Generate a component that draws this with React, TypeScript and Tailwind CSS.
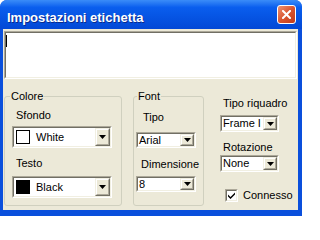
import React from "react";

// drop-down arrow button of a classic combo box
function DropButton({ wide }: { wide?: boolean }) {
  return (
    <div
      className={`flex shrink-0 border border-t-[#f1efe2] border-l-[#f1efe2] border-b-[#716f64] border-r-[#716f64] ${
        wide ? "w-[15px]" : "w-[14px]"
      }`}
    >
      <div className="flex flex-1 items-center justify-center border border-t-white border-l-white border-b-[#aca899] border-r-[#aca899] bg-[#ece9d8]">
        <svg width="7" height="4" viewBox="0 0 7 4">
          <polygon points="0,0 7,0 3.5,4" fill="black" />
        </svg>
      </div>
    </div>
  );
}

function Combo({
  className,
  wide,
  children,
}: {
  className: string;
  wide?: boolean;
  children: React.ReactNode;
}) {
  return (
    <div
      className={`flex border border-t-[#aca899] border-l-[#aca899] border-b-white border-r-white ${className}`}
    >
      <div className="flex min-w-0 flex-1 border border-t-[#716f64] border-l-[#716f64] border-b-[#f1efe2] border-r-[#f1efe2] bg-white">
        <div className="flex min-w-0 flex-1 items-center overflow-hidden whitespace-nowrap">
          {children}
        </div>
        <DropButton wide={wide} />
      </div>
    </div>
  );
}

export default function App() {
  return (
    <div className="h-[216px] w-[302px] bg-white font-['Liberation_Sans',Arial,sans-serif] text-[11px] leading-[13px] text-black">
      <div className="flex h-full flex-col rounded-t-[7px] bg-[#0a4fdc]">
        {/* Title bar */}
        <div className="flex h-[29px] shrink-0 items-start justify-between rounded-t-[7px] bg-linear-to-b from-[#3a8cf8] from-0% via-[#0a5eee] via-25% to-[#0348d6]">
          <span className="pl-[7px] pt-[10px] text-[13px] font-bold leading-[15px] text-white [text-shadow:1px_1px_0_#0a2a8c]">
            Impostazioni etichetta
          </span>
          <div className="mr-[6px] mt-[5px] flex h-[19px] w-[19px] items-center justify-center rounded-[3px] border border-white bg-linear-to-br from-[#ec9272] via-[#d9552f] to-[#c23a18]">
            <svg width="9" height="9" viewBox="0 0 9 9">
              <path d="M1 1 L8 8 M8 1 L1 8" stroke="white" strokeWidth="2" strokeLinecap="square" />
            </svg>
          </div>
        </div>

        {/* Client area */}
        <div className="mb-[6px] ml-[3px] mr-[4px] flex flex-1 flex-col bg-[#ece9d8] pt-[2px]">
          {/* Text box */}
          <div className="mx-[1px] h-[48px] border border-t-[#aca899] border-l-[#aca899] border-b-white border-r-white">
            <div className="h-full border border-t-[#716f64] border-l-[#716f64] border-b-[#f1efe2] border-r-[#f1efe2] bg-white">
              <div className="mt-[2px] h-[12px] w-px bg-black" />
            </div>
          </div>

          <div className="mt-[11px] flex items-start">
            {/* Colore */}
            <fieldset className="ml-[1px] flex h-[116px] w-[118px] flex-col rounded-[3px] border border-[#d0d0bf]">
              <legend className="ml-[5px] px-[1px] leading-[13px]">Colore</legend>
              <span className="ml-[11px] mt-[6px]">Sfondo</span>
              <Combo className="ml-[7px] mt-[4px] h-[22px] w-[100px]" wide>
                <div className="ml-[2px] h-[14px] w-[14px] shrink-0 border border-black bg-white" />
                <span className="ml-[6px]">White</span>
              </Combo>
              <span className="ml-[11px] mt-[9px]">Testo</span>
              <Combo className="ml-[7px] mt-[6px] h-[22px] w-[100px]" wide>
                <div className="ml-[2px] h-[14px] w-[14px] shrink-0 bg-black" />
                <span className="ml-[6px]">Black</span>
              </Combo>
            </fieldset>

            {/* Font */}
            <fieldset className="ml-[11px] flex h-[116px] w-[71px] flex-col rounded-[3px] border border-[#d0d0bf]">
              <legend className="ml-[3px] px-[1px] leading-[13px]">Font</legend>
              <span className="ml-[9px] mt-[8px]">Tipo</span>
              <Combo className="ml-[2px] mt-[8px] h-[16px] w-[60px]">
                <span className="ml-[1px]">Arial</span>
              </Combo>
              <span className="ml-[7px] mt-[10px]">Dimensione</span>
              <Combo className="ml-[2px] mt-[5px] h-[16px] w-[60px]">
                <span className="ml-[1px]">8</span>
              </Combo>
            </fieldset>

            {/* Frame, rotation, connected */}
            <div className="ml-[16px] mt-[7px] flex flex-col">
              <span className="ml-[3px]">Tipo riquadro</span>
              <Combo className="mt-[5px] h-[17px] w-[59px]">
                <span className="ml-[1px]">Frame I</span>
              </Combo>
              <span className="ml-[3px] mt-[9px]">Rotazione</span>
              <Combo className="mt-[1px] h-[17px] w-[59px]">
                <span className="ml-[1px]">None</span>
              </Combo>
              <div className="mt-[17px] flex items-center">
                <div className="ml-[5px] h-[13px] w-[13px] border border-t-[#aca899] border-l-[#aca899] border-b-white border-r-white">
                  <div className="flex h-full w-full items-center justify-center border border-t-[#716f64] border-l-[#716f64] border-b-[#f1efe2] border-r-[#f1efe2] bg-white">
                    <svg width="7" height="7" viewBox="0 0 7 7">
                      <path d="M0 2.5 L2.5 5 L7 0.5 L7 2.5 L2.5 7 L0 4.5 Z" fill="black" />
                    </svg>
                  </div>
                </div>
                <span className="ml-[5px]">Connesso</span>
              </div>
            </div>
          </div>
        </div>
      </div>
    </div>
  );
}
